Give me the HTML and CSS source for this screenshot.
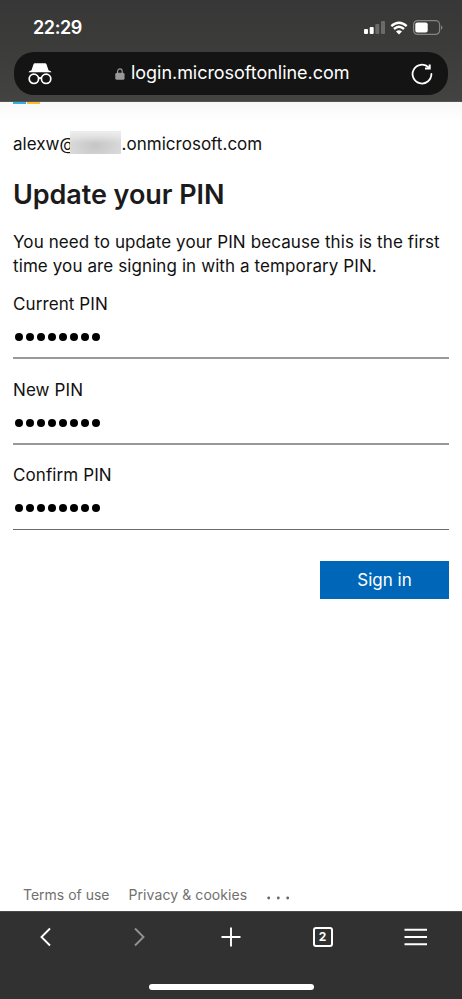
FILE: index.html
```html
<!DOCTYPE html>
<html lang="en">
<head>
<meta charset="utf-8">
<title>Update your PIN</title>
<link rel="stylesheet" href="styles.css">
</head>
<body>
<header class="browser-top">
  <div class="status">
    <span class="time">22:29</span>
    <svg class="signal" width="21" height="13" viewBox="0 0 21 13" fill="#fff"><rect y="8" width="4" height="5" rx="1"/><rect x="5.7" y="6" width="4" height="7" rx="1"/><rect x="11.3" y="3" width="4" height="10" rx="1" opacity=".25"/><rect x="17" width="4" height="13" rx="1" opacity=".25"/></svg>
    <svg class="wifi" width="18" height="14" viewBox="0 0 18 14"><path d="M1.3 5.2Q9-1.6 16.7 5.2M4 8Q9 3.6 14 8" fill="none" stroke="#fff" stroke-width="2.4"/><path d="M6 10.4Q9 8 12 10.4L9 13.4Z" fill="#fff"/></svg>
    <svg class="battery" width="30" height="15" viewBox="0 0 30 15"><rect x=".6" y=".6" width="26" height="13.8" rx="4" fill="none" stroke="#858585" stroke-width="1.2"/><rect x="2.3" y="2.4" width="12.4" height="10" rx="2" fill="#fff"/><path d="M28 5.2q3 2.3 0 4.6Z" fill="#858585"/></svg>
  </div>
  <div class="address">
    <svg class="incognito" width="24" height="22" viewBox="0 0 24 22"><path d="M5.4 1.5Q5.8 .3 7 .3H17Q18.2 .3 18.600 1.500L20.500 7.200Q23.500 8 23.500 9.200H.5Q.5 8 3.500 7.200Z" fill="#fff"/><g fill="none" stroke="#fff" stroke-width="1.700"><circle cx="5.900" cy="15.800" r="4.700"/><circle cx="18.100" cy="15.800" r="4.700"/><path d="M10.400 15.500q1.600-1.400 3.200 0"/></g></svg>
    <svg class="lock" width="10" height="12" viewBox="0 0 10 12"><rect x=".3" y="4.800" width="9.200" height="7" rx="1.500" fill="#999"/><path d="M2.600 5V3.200a2.300 2.300 0 0 1 4.600 0V5" fill="none" stroke="#999" stroke-width="1.200"/></svg>
    <span class="url">login.microsoftonline.com</span>
    <svg class="reload" width="22" height="22" viewBox="0 0 22 22" fill="none" stroke="#fff"><path d="M17.700 4.500A9.400 9.400 0 1 0 20.400 11" stroke-width="1.800" stroke-linecap="round"/><path d="M18.700 1.500V5.500H14" stroke-width="2"/></svg>
  </div>
</header>
<main class="page">
  <div class="logo"><i class="blue"></i><i class="yellow"></i></div>
  <div class="account"><span class="user">alexw@</span><span class="mask"></span><span class="domain">.onmicrosoft.com</span></div>
  <h1>Update your PIN</h1>
  <p class="message">You need to update your PIN because this is the first<br>time you are signing in with a temporary PIN.</p>
  <div class="field"><label>Current PIN</label><div class="dots"><i></i><i></i><i></i><i></i><i></i><i></i><i></i><i></i></div></div>
  <div class="field"><label>New PIN</label><div class="dots"><i></i><i></i><i></i><i></i><i></i><i></i><i></i><i></i></div></div>
  <div class="field last"><label>Confirm PIN</label><div class="dots"><i></i><i></i><i></i><i></i><i></i><i></i><i></i><i></i></div></div>
  <button class="signin">Sign in</button>
  <footer><span class="terms">Terms of use</span><span class="privacy">Privacy &amp; cookies</span><svg width="24" height="4" viewBox="0 0 24 4" fill="#666"><circle cx="1.700" cy="2" r="1.400"/><circle cx="11.300" cy="2" r="1.400"/><circle cx="20.700" cy="2" r="1.400"/></svg></footer>
</main>
<nav class="browser-bottom">
  <div class="tools">
    <svg width="24" height="24" viewBox="0 0 24 24"><path d="M16 3.500 7.500 12 16 20.500"/></svg>
    <svg class="muted" width="24" height="24" viewBox="0 0 24 24"><path d="m8 3.500 8.500 8.500L8 20.500"/></svg>
    <svg width="24" height="24" viewBox="0 0 24 24"><path d="M12 2.500v19M2.500 12h19"/></svg>
    <span class="tabs">2</span>
    <svg width="24" height="24" viewBox="0 0 24 24"><path d="M.5 4.800h22.500M.5 12h22.500M.5 19.300h22.500"/></svg>
  </div>
  <div class="home"></div>
</nav>
</body>
</html>
```
FILE: styles.css
```css
* { box-sizing: border-box; }
body { margin: 0; width: 462px; height: 999px; display: flex; flex-direction: column; overflow: hidden; background: #fff; color: #111; font-family: Inter, "Liberation Sans", sans-serif; font-size: 17px; }
svg { display: block; flex: none; }
.browser-top { height: 102px; flex: none; padding: 0 14px; background: linear-gradient(#373737, #3c3c3a 50%, #434341); border-bottom: 1px solid #555; }
.status { height: 52px; display: flex; align-items: center; padding: 3px 5px 0 19px; color: #fff; }
.time { font-size: 18px; font-weight: 600; line-height: 22px; margin-right: auto; letter-spacing: -.4px; }
.wifi { margin-left: 5px; }
.battery { margin-left: 5px; }
.address { height: 43px; border-radius: 20px; background: #141414; display: flex; align-items: center; padding: 0 15px 0 14px; color: #fff; }
.lock { margin-left: 63px; margin-top: 1px; }
.url { margin: -1px 0 0 6px; font-size: 18px; line-height: 24px; white-space: nowrap; letter-spacing: -.04px; }
.reload { margin-left: auto; }
.page { flex: 1; display: flex; flex-direction: column; padding: 0 13px; background: linear-gradient(#f8f8f8, #fff 20px); }
.logo { height: 2px; display: flex; gap: 1px; flex: none; }
.logo i { width: 13px; }
.blue { background: #36ade5; }
.yellow { background: #f5bd30; }
.account { height: 24px; margin-top: 27px; display: flex; line-height: 26px; white-space: nowrap; letter-spacing: .03px; }
.mask { width: 51px; height: 23px; margin-left: -5.500px; z-index: 1; background: linear-gradient(#eee, rgba(238, 238, 238, 0) 50%), radial-gradient(ellipse at 50% 65%, #c6c6c6, #dedede 90%); }
h1 { margin: 21px 0 0; font-size: 27px; line-height: 38px; font-weight: 600; color: #1b1b1b; letter-spacing: -.07px; }
.message { margin: 16px 0 0; line-height: 24px; white-space: nowrap; letter-spacing: .1px; }
.field { height: 86px; padding-top: 14px; display: flex; flex-direction: column; flex: none; letter-spacing: .1px; }
.field label { line-height: 24px; }
.dots { display: flex; gap: 3px; height: 43px; padding: 17px 0 0 2px; border-bottom: 2px solid #999; }
.dots i { width: 8px; height: 8px; border-radius: 50%; background: #000; }
.last { padding-top: 13px; }
.last .dots { height: 43px; border-bottom: 1px solid #6b6b6b; }
.signin { align-self: flex-end; margin-top: 25px; width: 129px; height: 38px; padding: 0; border: 0; background: #0067b8; color: #fff; font: inherit; }
footer { margin-top: auto; height: 32px; display: flex; line-height: 32px; padding-left: 10px; color: #707070; font-size: 14px; white-space: nowrap; }
.privacy { margin-left: 19px; letter-spacing: .08px; }
footer svg { margin: 17px 0 0 20px; }
.browser-bottom { height: 88px; flex: none; background: #303130; border-top: 1px solid #4a4a4a; display: flex; flex-direction: column; align-items: center; }
.tools { width: 394px; height: 50px; display: flex; justify-content: space-between; align-items: center; }
.tools svg { fill: none; stroke: #fff; stroke-width: 1.900; }
.tools .muted { stroke: #929292; }
.tabs { width: 20px; height: 20px; margin: 0 3px 0 1px; border: 2px solid #fff; border-radius: 3px; color: #fff; font-size: 12px; line-height: 16px; font-weight: 700; text-align: center; }
.home { width: 165px; height: 6px; margin-top: 22px; border-radius: 3px; background: #fff; }
```
